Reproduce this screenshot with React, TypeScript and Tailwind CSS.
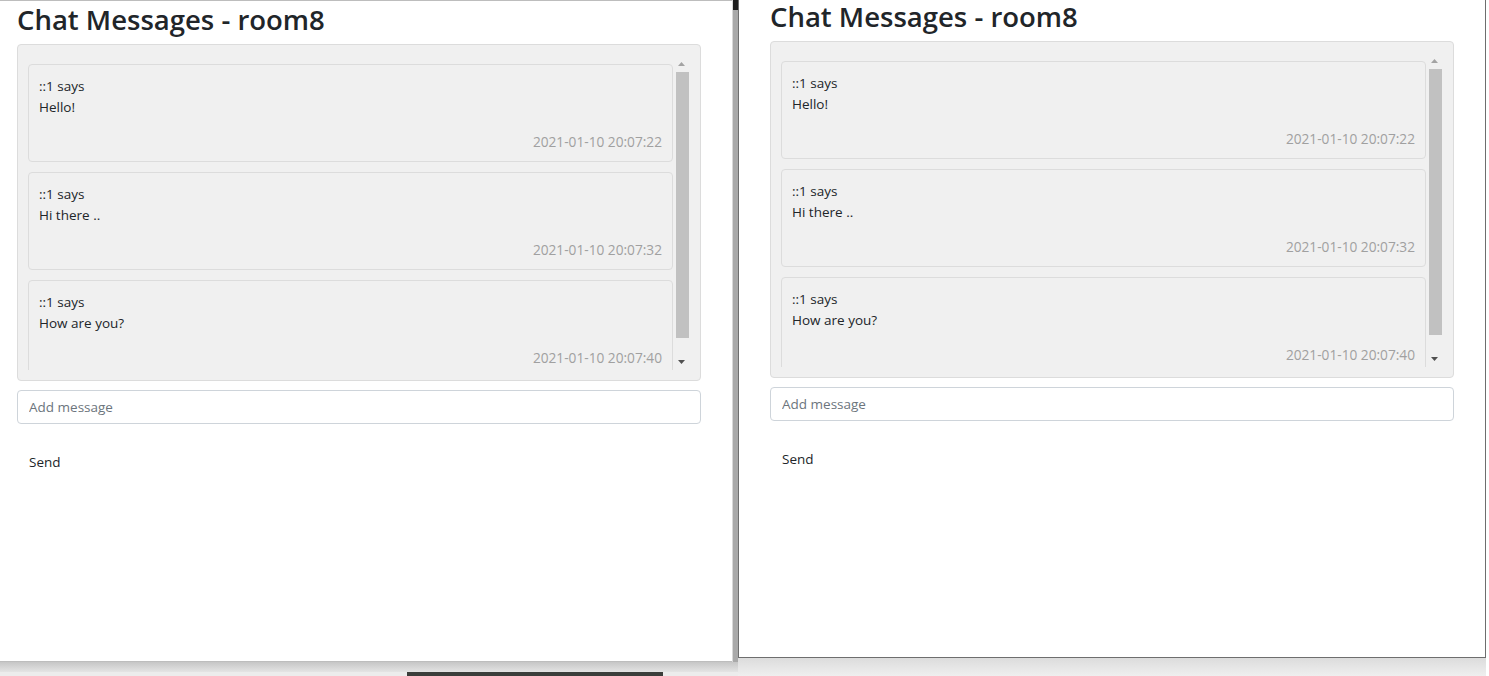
import React from 'react';

interface Message {
  from: string;
  text: string;
  time: string;
}

const messages: Message[] = [
  { from: '::1', text: 'Hello!', time: '2021-01-10 20:07:22' },
  { from: '::1', text: 'Hi there ..', time: '2021-01-10 20:07:32' },
  { from: '::1', text: 'How are you?', time: '2021-01-10 20:07:40' },
];

const MessageCard: React.FC<{ msg: Message }> = ({ msg }) => (
  <div className="mb-[10px] flex h-[98px] shrink-0 flex-col rounded-[4px] border border-[#dcdcdc] px-[10px] pt-[11px] pb-[9px] text-[13.5px] leading-[21px] text-[#212529]">
    <div>{msg.from} says</div>
    <div>{msg.text}</div>
    <div className="mt-auto text-right text-[13.7px] text-[#a0a0a0]">{msg.time}</div>
  </div>
);

// classic chrome-style scrollbar, scrolled to the top
const FakeScrollbar: React.FC = () => (
  <div className="flex w-[17px] shrink-0 flex-col">
    <div className="flex h-[17px] items-center justify-center">
      <svg width="7" height="4" viewBox="0 0 7 4">
        <path d="M0 4 L3.5 0 L7 4 Z" fill="#a3a3a3" />
      </svg>
    </div>
    <div className="flex-1 pl-[3px] pr-[1px]">
      <div className="h-[266px] bg-[#c1c1c1]" />
    </div>
    <div className="flex h-[17px] items-center justify-center">
      <svg width="7" height="4" viewBox="0 0 7 4">
        <path d="M0 0 L7 0 L3.5 4 Z" fill="#505050" />
      </svg>
    </div>
  </div>
);

const ChatPanel: React.FC<{ className?: string }> = ({ className = '' }) => (
  <div className={`flex flex-col items-start ${className}`}>
    <h3 className="mb-[7px] text-[27.5px] leading-[34px] font-semibold text-[#212529]">Chat Messages - room8</h3>
    <div className="w-[684px] rounded-[4px] border border-[#dcdcdc] bg-[#f0f0f0] p-[10px]">
      <div className="flex h-[315px]">
        <div className="flex flex-1 flex-col overflow-hidden pt-[9px]">
          {messages.map((m, i) => (
            <MessageCard key={i} msg={m} />
          ))}
        </div>
        <FakeScrollbar />
      </div>
    </div>
    <input
      className="mt-[9px] h-[34px] w-[684px] rounded-[4px] border border-[#ced4da] bg-white px-[11px] text-[13.5px] text-[#495057] outline-none placeholder:text-[#6c757d]"
      placeholder="Add message"
    />
    <button className="mt-[21px] h-[34px] bg-white px-[12px] text-[13.5px] text-[#212529]">Send</button>
  </div>
);

export default function App() {
  return (
    <div
      className="flex h-[676px] w-[1489px] overflow-hidden bg-[#ececec]"
      style={{ fontFamily: '"Open Sans", "Noto Sans", sans-serif' }}
    >
      {/* left browser window */}
      <div className="flex w-[738px] shrink-0 flex-col">
        <div className="flex">
          <div className="h-[662px] w-[732px] shrink-0 border-t border-b border-[#bdbdbd] bg-white">
            <ChatPanel className="pt-[2px] pl-[17px]" />
          </div>
          <div className="flex w-[6px] flex-col border-l border-[#d8d8d8]">
            <div className="h-[10px] bg-[#1e1e1e]" />
            <div className="flex-1 bg-[#a9a9a9]" />
          </div>
        </div>
        <div className="h-[10px] bg-gradient-to-b from-[#c6c6c6] to-[#e4e4e4]" />
        <div className="flex h-[4px]">
          <div className="ml-[407px] w-[256px] bg-[#3b3e3b]" />
        </div>
      </div>

      {/* right browser window */}
      <div className="flex flex-col">
        <div className="h-[658px] w-[748px] shrink-0 border border-t-0 border-[#6e6e6e] bg-white">
          <ChatPanel className="pl-[31px]" />
        </div>
        <div className="flex-1 bg-gradient-to-b from-[#dcdcdc] to-[#efefef]" />
      </div>
      <div className="flex-1 bg-white" />
    </div>
  );
}
